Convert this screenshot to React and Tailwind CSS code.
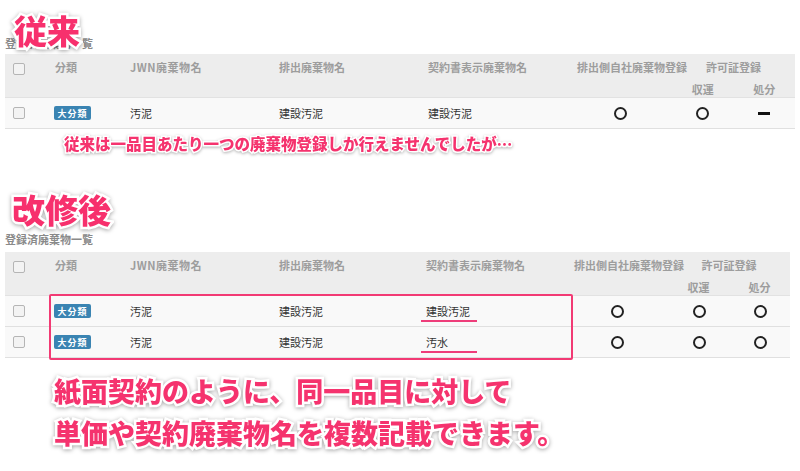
import React from "react";

const PINK = "text-[#f5336e]";

function Checkbox() {
  return <span className="block w-[12px] h-[12px] rounded-[2px] border border-[#b5b5b5] bg-[#f3f3f3]" />;
}

function Badge() {
  return (
    <span className="inline-flex items-center justify-center w-[37px] h-[14px] rounded-[2px] bg-[#3a84b2] text-white text-[9px] font-bold leading-none tracking-[1px]">
      大分類
    </span>
  );
}

function Circle() {
  return <span className="block w-[13px] h-[13px] rounded-full border-2 border-[#222]" />;
}

function Dash() {
  return <span className="block w-[12px] h-[3px] bg-[#111]" />;
}

function Table({ cols, rows }) {
  return (
    <div className="text-[11px] leading-[13px]">
      <div className={`grid ${cols} bg-[#ededed] h-[44px] border-b border-[#e2e2e2]`}>
        <div className="pl-[8px] pt-[9px]"><Checkbox /></div>
        <div className="pl-[8px] pt-[7px] font-bold text-[#9d9d9d]">分類</div>
        <div className="pl-[8px] pt-[7px] font-bold text-[#9d9d9d] tracking-[0.5px]">JWN廃棄物名</div>
        <div className="pl-[8px] pt-[7px] font-bold text-[#9d9d9d]">排出廃棄物名</div>
        <div className="pl-[8px] pt-[7px] font-bold text-[#9d9d9d]">契約書表示廃棄物名</div>
        <div className="pl-[8px] pt-[7px] font-bold text-[#9d9d9d] whitespace-nowrap">排出側自社廃棄物登録</div>
        <div className="col-span-2 grid grid-cols-2 pt-[7px] font-bold text-[#9d9d9d]">
          <div className="col-span-2 text-center">許可証登録</div>
          <div className="text-center mt-[8px]">収運</div>
          <div className="text-center mt-[8px]">処分</div>
        </div>
      </div>
      {rows.map((r, i) => (
        <div key={i} className={`grid ${cols} h-[31px] items-center bg-[#f9f9f9] border-b border-[#e0e0e0] text-[#333]`}>
          <div className="pl-[8px]"><Checkbox /></div>
          <div className="pl-[7px] flex items-center"><Badge /></div>
          <div className="pl-[8px]">汚泥</div>
          <div className="pl-[8px]">建設汚泥</div>
          <div className="pl-[8px]">
            <span className="relative">
              {r.name}
              {r.underline && (
                <span className="absolute left-[-5px] top-full mt-[1px] w-[56px] h-[2px] bg-[#ee3d7a]" />
              )}
            </span>
          </div>
          <div className="flex justify-center"><Circle /></div>
          <div className="flex justify-center"><Circle /></div>
          <div className="flex justify-center">{r.dash ? <Dash /> : <Circle />}</div>
        </div>
      ))}
    </div>
  );
}

const titleCls =
  "text-[33px] leading-[34px] font-black text-[#f7306d] [paint-order:stroke_fill] [-webkit-text-stroke:5px_white] drop-shadow-[0_1px_2px_rgba(0,0,0,0.35)]";

export default function App() {
  return (
    <div
      className="w-[800px] h-[471px] bg-white overflow-hidden"
      style={{ fontFamily: '"Noto Sans CJK JP", "Noto Sans", sans-serif' }}
    >
      {/* 従来 */}
      <div className="relative pt-[37px] pl-[5px] pr-[5px]">
        <div className="text-[11px] leading-[13px] text-[#8a8a8a] font-bold">登録済廃棄物一覧</div>
        <div className="mt-[4px]">
          <Table
            cols="grid-cols-[42px_75px_149px_149px_149px_103px_61px_62px]"
            rows={[{ name: "建設汚泥", dash: true }]}
          />
        </div>
        <div className={`absolute top-[13px] left-[14px] ${titleCls}`}>従来</div>
      </div>

      <div className="mt-[4px] ml-[64px] text-[15.5px] leading-[20px] font-black text-[#f5336e] [paint-order:stroke_fill] [-webkit-text-stroke:3px_white] drop-shadow-[0_1px_1.5px_rgba(0,0,0,0.3)]">
        従来は一品目あたり一つの廃棄物登録しか行えませんでしたが…
      </div>

      {/* 改修後 */}
      <div className="mt-[39px] pl-[12px]">
        <div className={titleCls}>改修後</div>
      </div>
      <div className="mt-[7px] pl-[5px] pr-[10px]">
        <div className="text-[11px] leading-[13px] text-[#8a8a8a] font-bold">登録済廃棄物一覧</div>
        <div className="relative mt-[6px]">
          <Table
            cols="grid-cols-[42px_75px_149px_147px_148px_102px_62px_60px]"
            rows={[
              { name: "建設汚泥", underline: true },
              { name: "汚水", underline: true },
            ]}
          />
          <div className="absolute left-[44px] top-[42px] w-[524px] h-[66px] border-2 border-[#f23a74] rounded-[2px]" />
        </div>
      </div>

      <div className={`mt-[12px] ml-[54px] text-[27px] leading-[42px] font-black ${PINK} [paint-order:stroke_fill] [-webkit-text-stroke:5px_white] drop-shadow-[0_1px_2px_rgba(0,0,0,0.35)]`}>
        <div>紙面契約のように、同一品目に対して</div>
        <div>単価や契約廃棄物名を複数記載できます。</div>
      </div>
    </div>
  );
}
